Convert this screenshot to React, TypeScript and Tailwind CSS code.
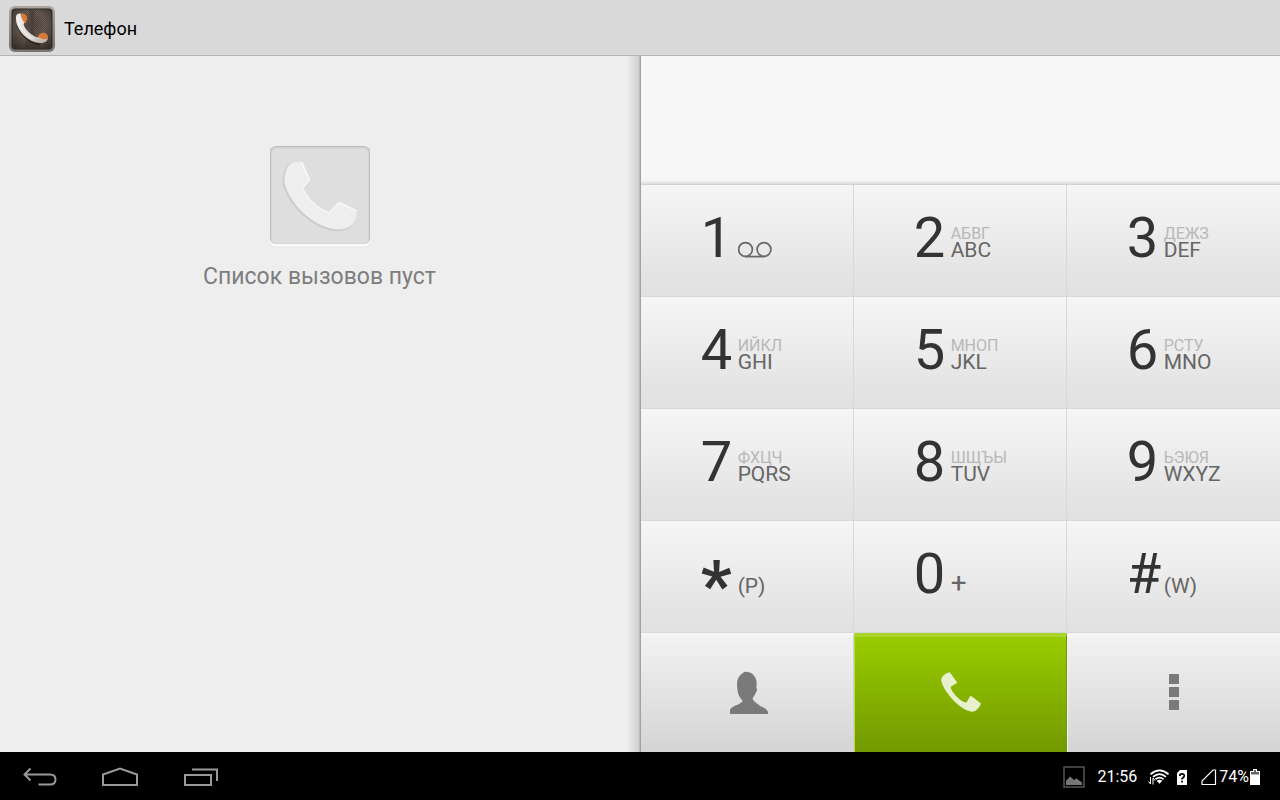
import { useState } from 'react';

type Key = { digit: string; latin?: string; cyrillic?: string };

const keys: Key[] = [
  { digit: '1' },
  { digit: '2', cyrillic: 'АБВГ', latin: 'ABC' },
  { digit: '3', cyrillic: 'ДЕЖЗ', latin: 'DEF' },
  { digit: '4', cyrillic: 'ИЙКЛ', latin: 'GHI' },
  { digit: '5', cyrillic: 'МНОП', latin: 'JKL' },
  { digit: '6', cyrillic: 'РСТУ', latin: 'MNO' },
  { digit: '7', cyrillic: 'ФХЦЧ', latin: 'PQRS' },
  { digit: '8', cyrillic: 'ШЩЪЫ', latin: 'TUV' },
  { digit: '9', cyrillic: 'ЬЭЮЯ', latin: 'WXYZ' },
  { digit: '*', latin: '(P)' },
  { digit: '0', latin: '+' },
  { digit: '#', latin: '(W)' },
];

function AppIcon() {
  return (
    <svg width="48" height="48" viewBox="0 0 48 48" aria-hidden="true">
      <defs>
        <linearGradient id="frame" x1="0" y1="0" x2="0" y2="1">
          <stop offset="0" stopColor="#aca69e" />
          <stop offset="1" stopColor="#7b736b" />
        </linearGradient>
        <radialGradient id="plate" cx="0.5" cy="0.4" r="0.7">
          <stop offset="0" stopColor="#51463f" />
          <stop offset="0.5" stopColor="#6a5c52" />
          <stop offset="1" stopColor="#3a322d" />
        </radialGradient>
        <pattern id="mesh" width="2" height="2" patternUnits="userSpaceOnUse">
          <rect width="1" height="1" fill="#2b2420" opacity="0.3" />
          <rect x="1" y="1" width="1" height="1" fill="#2b2420" opacity="0.3" />
        </pattern>
        <linearGradient id="handset" x1="0" y1="0" x2="1" y2="1">
          <stop offset="0" stopColor="#f4f2f0" />
          <stop offset="0.6" stopColor="#dcd7d2" />
          <stop offset="1" stopColor="#b5aca4" />
        </linearGradient>
      </defs>
      <rect x="1" y="1" width="46" height="46" rx="6" fill="url(#frame)" />
      <rect x="3.5" y="3.5" width="41" height="41" rx="4" fill="#2d2622" />
      <rect x="4.5" y="4.5" width="39" height="39" rx="3" fill="url(#plate)" />
      <path d="M24 22 L21 5 H27Z M24 22 L16 43 H32Z" fill="#29221e" opacity="0.3" />
      <rect x="4.5" y="4.5" width="39" height="39" rx="3" fill="url(#mesh)" />
      <path
        d="M9 20 C13 30 21 38.500 32 39.500"
        fill="none"
        stroke="#1d1815"
        strokeWidth="2"
        opacity="0.6"
      />
      <path
        d="M9 9.500 C10.500 8 13.500 8.500 15 10 L18 17 C17 18 16 18 15.500 19 C17 25 23 30 29.500 32.500 L33 30 L39.500 32 C40.500 35 38 37.500 34 38 C21 38.500 8.500 26 8 14 C8 12 8 10.500 9 9.500Z"
        fill="url(#handset)"
      />
      <path
        d="M12.500 9.500 C14 7.500 18 9 19 12 C19.500 15 18.500 17 16.500 18 C15 16 13 12.500 12.500 9.500Z"
        fill="#d97a38"
      />
      <path
        d="M30 32 C30.500 29 33.500 27 37 28 C39.500 29 40.500 31 39.500 33.500 C37 35 33 34 30 32Z"
        fill="#d97a38"
      />
      <path d="M9.500 13 C10.500 22 17 30 26 34" fill="none" stroke="#fff" opacity="0.7" />
    </svg>
  );
}

function EmptyLogIcon() {
  const handset =
    'M21 17 C23 16 29 15.500 31.500 17 L39.500 35 L32.500 43.500 C39 56 48 64 59.500 68 L69 57.500 L86.500 66 C87.500 71 85 77 81 80 C74 85 62 84 51 79 C33 70 19 53 15 38 C13.500 30 16 21 21 17Z';
  return (
    <svg width="100" height="100" viewBox="0 0 100 100" aria-hidden="true">
      <rect x="0" y="1" width="100" height="99" rx="6" fill="#fbfbfb" />
      <rect x="0" y="0" width="100" height="98" rx="6" fill="#bcbcbc" />
      <rect x="1" y="1" width="98" height="97" rx="5" fill="#d5d5d5" />
      <rect x="2" y="3" width="96" height="94" rx="4" fill="#dedede" />
      <path d={handset} transform="translate(-1 1)" fill="none" stroke="#c9c9c9" strokeWidth="1.500" />
      <path d={handset} fill="#eeeeee" />
      <path
        d="M31.500 17 L39.500 35 L32.500 43.500 C39 56 48 64 59.500 68 L69 57.500 L86.500 66"
        transform="translate(0 -1)"
        fill="none"
        stroke="#fafafa"
        strokeWidth="1.500"
      />
    </svg>
  );
}

function VoicemailIcon() {
  return (
    <svg
      width="36"
      height="18"
      viewBox="0 0 36 18"
      fill="none"
      stroke="#666"
      strokeWidth="1.700"
      role="img"
      aria-label="Голосовая почта"
    >
      <circle cx="7.500" cy="9.500" r="6.900" />
      <circle cx="26" cy="9.500" r="6.900" />
      <path d="M7 16.600 H26.500" />
    </svg>
  );
}

function ContactIcon() {
  return (
    <svg width="38" height="44" viewBox="0 0 38 44" fill="#7a7a7a" aria-hidden="true">
      <path d="M0 43 V40 C0 37 3 35.500 7 34 C10 32.500 12.500 31 12.500 29.500 C10 27 8 24 7.500 19 C7 15 7 13 7.300 10 C8 6 11 3 14 1.200 C16 0.200 19 1 22 2.500 C25 5 27 9 26.700 13 L26.300 16.500 C27.300 18 27.200 20 25.800 21.500 C25.500 24 23 25.500 22.500 28 C24 31 28 33 31 35.500 C35 37 38 38.500 38 42 V43Z" />
    </svg>
  );
}

function CallIcon() {
  return (
    <svg width="40" height="40" viewBox="0 0 40 40" fill="#e8f0cd" aria-hidden="true">
      <path d="M8.800 0.300 L16 10.200 L15.500 11.200 L9.700 14.800 C9.500 17 12 21 16 25 C19 28 22.500 30.700 25.500 30.500 L29 24.300 L30.200 24 L39.800 31.200 C39.500 34 36.500 37.800 33.500 39.300 C30 40.500 25 38.500 19.500 34.500 C12 29 4 19.500 1 11.500 C-0.300 8.500 0 6.500 1.500 4.500 C3.500 2.500 6.500 0.300 8.800 0.300Z" />
    </svg>
  );
}

function MoreIcon() {
  return (
    <svg width="10" height="36" viewBox="0 0 10 36" fill="#7a7a7a" aria-hidden="true">
      <rect width="10" height="10" rx="0.500" />
      <rect y="13" width="10" height="10" rx="0.500" />
      <rect y="26" width="10" height="10" rx="0.500" />
    </svg>
  );
}

function Header() {
  return (
    <header className="flex h-14 items-center gap-2 border-b border-[#b4b4b4] bg-[#d9d9d9] px-2 pt-0.5">
      <AppIcon />
      <h1 className="text-lg text-black">Телефон</h1>
    </header>
  );
}

function CallLog() {
  return (
    <section className="flex border-r border-[#bcbcbc] bg-[#eeeeee]">
      <div className="flex flex-1 flex-col items-center gap-4 pt-[90px] pl-3">
        <EmptyLogIcon />
        <p className="text-[23px] leading-[30px] text-[#7d7d7d]">Список вызовов пуст</p>
      </div>
      <div className="w-3 bg-linear-to-r from-[#eeeeee] to-[#cfcfcf]" />
    </section>
  );
}

function KeyLabel({ digit, latin, cyrillic }: Key) {
  if (digit === '1') return <VoicemailIcon />;
  return (
    <>
      {cyrillic && <span className="text-base leading-4 text-[#b8b8b8]">{cyrillic}</span>}
      <span
        className={
          latin === '+'
            ? 'text-[28px] leading-[22px] text-[#666]'
            : 'text-[21px] leading-4 text-[#666]'
        }
      >
        {latin}
      </span>
    </>
  );
}

function Dialer() {
  const [number, setNumber] = useState('');
  return (
    <section className="flex flex-col border-l border-[#a2a2a2] bg-[#f7f7f7]">
      <div className="flex h-[129px] flex-col border-b border-[#d2d2d2]">
        <input
          type="tel"
          aria-label="Номер телефона"
          className="w-full flex-1 px-6 text-center text-5xl text-[#333] outline-none"
          value={number}
          onChange={(e) => setNumber(e.target.value)}
        />
        <div className="h-1 bg-linear-to-b from-[#f7f7f7] to-[#dedede]" />
      </div>

      <div className="grid flex-1 grid-cols-3 grid-rows-4">
        {keys.map((key) => (
          <button
            key={key.digit}
            onClick={() => setNumber(number + key.digit)}
            className="flex items-center gap-[5px] border-r border-b border-[#d8d8d8] bg-linear-to-b from-[#f6f6f6] to-[#e0e0e0] pb-1.5 pl-[28%] text-left nth-[3n]:border-r-0"
          >
            <span
              className={
                key.digit === '*'
                  ? 'w-8 pt-6 text-[68px] leading-none font-bold text-[#333]'
                  : 'w-8 text-[56px] leading-none text-[#333]'
              }
            >
              {key.digit}
            </span>
            <span className="flex h-10 flex-col justify-end">
              <KeyLabel {...key} />
            </span>
          </button>
        ))}
      </div>

      <div className="grid h-[119px] grid-cols-3">
        <button
          aria-label="Контакты"
          className="flex items-center justify-center border-t-4 border-r border-t-[#f5f5f5] border-r-[#d0d0d0] bg-linear-to-b from-[#f2f2f2] to-[#d4d4d4] pb-1 pl-1"
        >
          <ContactIcon />
        </button>
        <button
          aria-label="Вызов"
          className="flex items-center justify-center border-t-4 border-r border-l border-t-[#a9d42c] border-r-[#6f9800] border-l-[#b5dc45] bg-linear-to-b from-[#99cc00] to-[#739900] pb-1.5"
        >
          <CallIcon />
        </button>
        <button
          aria-label="Ещё"
          className="flex items-center justify-center border-t-4 border-l border-[#f5f5f5] bg-linear-to-b from-[#f2f2f2] to-[#d4d4d4] pb-1.5"
        >
          <MoreIcon />
        </button>
      </div>
    </section>
  );
}

function SystemBar() {
  return (
    <footer className="flex h-12 items-center justify-between bg-black pt-0.5 pr-5 pl-[22px] text-base text-white">
      <nav className="flex items-center gap-[43px]">
        <button aria-label="Назад">
          <svg width="36" height="20" viewBox="0 0 36 20" fill="none" stroke="#999" strokeWidth="2">
            <path d="M2 7.500 H28 C32 7.500 33.500 10 33.500 12.500 C33.500 15.500 32 17.500 28 17.500 H16.500 M8.500 1.500 L2.500 7.500 L8.500 13.500" />
          </svg>
        </button>
        <button aria-label="Домой">
          <svg width="38" height="20" viewBox="0 0 38 20" fill="none" stroke="#999" strokeWidth="2">
            <path d="M2 18 V7.500 L19 1.500 L36 7.500 V18Z" />
          </svg>
        </button>
        <button aria-label="Недавние приложения">
          <svg width="36" height="20" viewBox="0 0 36 20" fill="none" stroke="#999" strokeWidth="2">
            <path d="M3 8 H29 V18 H3Z M10 2.500 H35 V14" />
          </svg>
        </button>
      </nav>

      <div className="flex items-center">
        <svg width="22" height="22" viewBox="0 0 22 22" className="mr-3" aria-hidden="true">
          <rect x="1" y="1" width="20" height="20" fill="none" stroke="#555" strokeWidth="1.500" />
          <path d="M3 19 V15 L7 10.500 L11 14 L13.500 12.500 L19 16.500 V19Z" fill="#777" />
        </svg>
        <time className="mr-[11px]">21:56</time>
        <svg width="21" height="16" viewBox="0 0 21 16" className="mr-2" aria-hidden="true">
          <g fill="none" stroke="#fff" strokeWidth="1.800">
            <path d="M2.500 5.300 Q11.500 -2.500 20.500 5.300" />
            <path d="M5 7.900 Q11.500 2.300 18 7.900" />
            <path d="M7.500 10.300 Q11.500 7 15.500 10.300" />
          </g>
          <path d="M8.700 11.700 Q11.500 9.800 14.300 11.700 L11.500 14.800Z" fill="#fff" />
          <path d="M2.500 8 V15 M0.500 12.500 L2.500 15 M5 15.500 V9 L7 11.500" fill="none" stroke="#fff" />
        </svg>
        <svg width="10" height="15" viewBox="0 0 10 15" className="mr-3.5" aria-hidden="true">
          <path d="M3 0 H10 V15 H0 V3Z" fill="#fff" />
          <path
            d="M2.800 6 C2.800 3.200 7.300 3.200 7.300 5.800 C7.300 7.500 5 7.500 5 9.500 M5 10.700 V12.500"
            fill="none"
            stroke="#000"
            strokeWidth="1.700"
          />
        </svg>
        <svg width="16" height="16" viewBox="0 0 16 16" className="mr-0.5" aria-hidden="true">
          <path d="M14.500 1 V15.500 H1 V12 L12 1Z" fill="none" stroke="#fff" strokeWidth="1.200" />
        </svg>
        <span>74%</span>
        <svg width="10" height="16" viewBox="0 0 10 16" className="ml-px" aria-hidden="true">
          <path d="M3 0 H7 V2 H10 V16 H0 V2 H3Z" fill="#fff" />
          <path d="M4 1 H6 V3 H9 V5.500 H1 V3 H4Z" fill="#666" />
        </svg>
      </div>
    </footer>
  );
}

export default function App() {
  return (
    <div className="flex min-h-screen flex-col font-[Roboto,sans-serif]">
      <Header />
      <main className="grid flex-1 grid-cols-2">
        <CallLog />
        <Dialer />
      </main>
      <SystemBar />
    </div>
  );
}
